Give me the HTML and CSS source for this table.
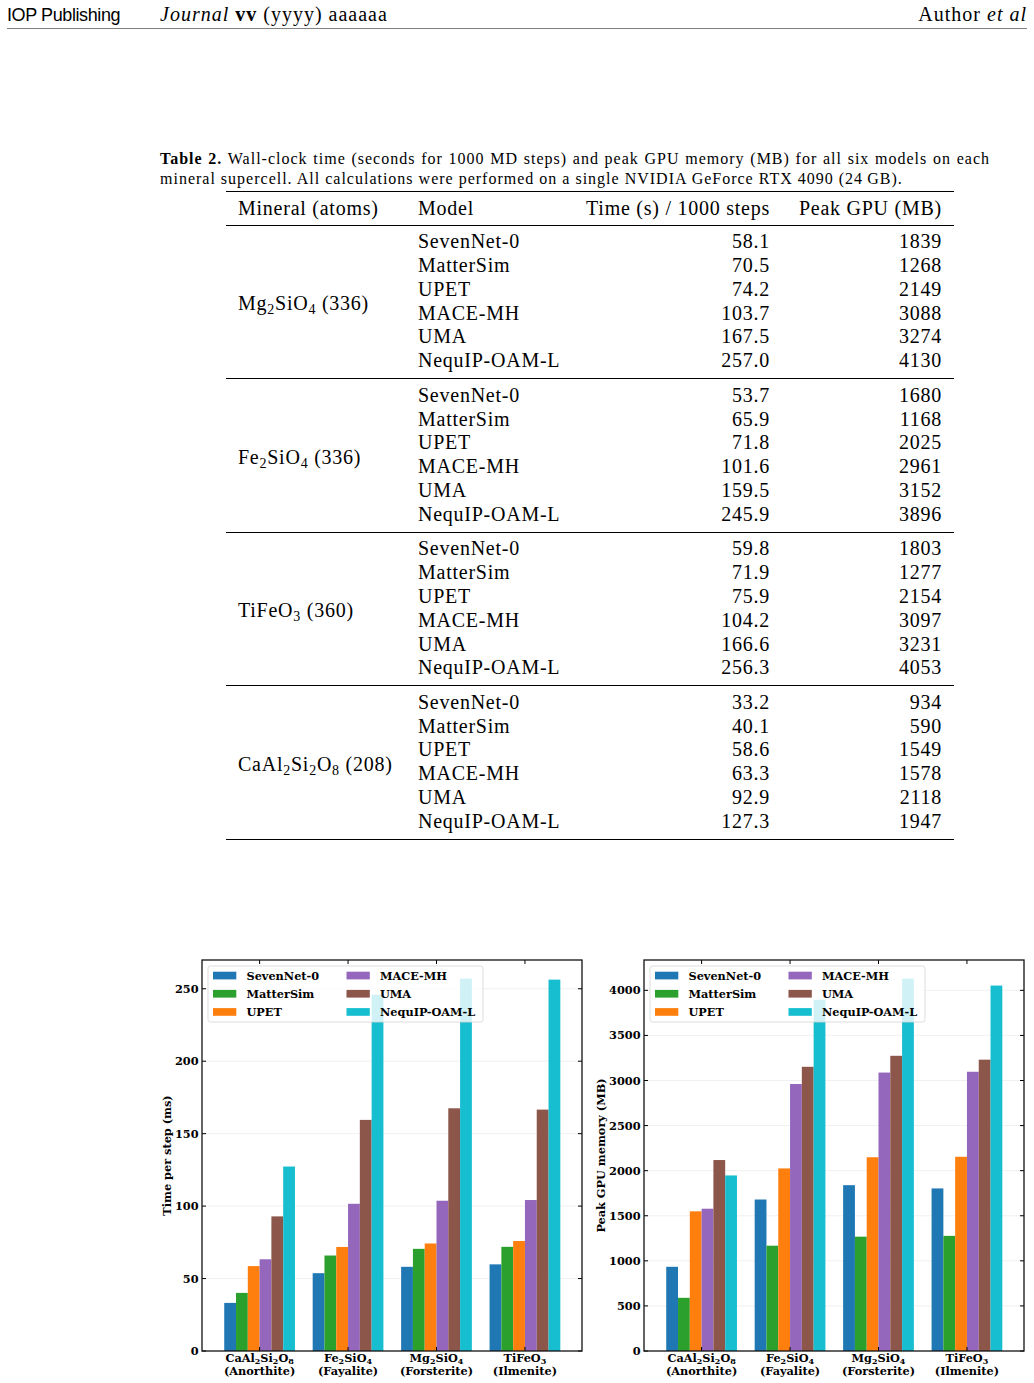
FILE: index.html
```html
<!DOCTYPE html>
<html lang="en">
<head>
<meta charset="UTF-8">
<meta name="viewport" content="width=device-width, initial-scale=1.0">
<title>Table 2 - Wall-clock time and GPU memory</title>
<link rel="stylesheet" href="styles.css">
</head>
<body>
<header class="running-head">
<span class="publisher">IOP Publishing</span>
<span class="journal"><i>Journal</i> <b>vv</b> (yyyy) aaaaaa</span>
<span class="author">Author <i>et al</i></span>
</header>
<div class="caption">
<span class="caption-line first"><b>Table 2.</b> Wall-clock time (seconds for 1000 MD steps) and peak GPU memory (MB) for all six models on each</span>
<span class="caption-line">mineral supercell. All calculations were performed on a single NVIDIA GeForce RTX 4090 (24&#8201;GB).</span>
</div>
<table class="results">
<colgroup>
<col class="col-mineral">
<col class="col-model">
<col class="col-time">
<col class="col-mem">
</colgroup>
<thead>
<tr>
<th class="mineral">Mineral (atoms)</th>
<th class="model">Model</th>
<th class="num">Time (s) / 1000 steps</th>
<th class="num last">Peak GPU (MB)</th>
</tr>
</thead>
<tbody>
<tr><td class="mineral" rowspan="6">Mg<sub>2</sub>SiO<sub>4</sub> (336)</td><td class="model">SevenNet-0</td><td class="num">58.1</td><td class="num last">1839</td></tr>
<tr><td class="model">MatterSim</td><td class="num">70.5</td><td class="num last">1268</td></tr>
<tr><td class="model">UPET</td><td class="num">74.2</td><td class="num last">2149</td></tr>
<tr><td class="model">MACE-MH</td><td class="num">103.7</td><td class="num last">3088</td></tr>
<tr><td class="model">UMA</td><td class="num">167.5</td><td class="num last">3274</td></tr>
<tr><td class="model">NequIP-OAM-L</td><td class="num">257.0</td><td class="num last">4130</td></tr>
</tbody>
<tbody>
<tr><td class="mineral" rowspan="6">Fe<sub>2</sub>SiO<sub>4</sub> (336)</td><td class="model">SevenNet-0</td><td class="num">53.7</td><td class="num last">1680</td></tr>
<tr><td class="model">MatterSim</td><td class="num">65.9</td><td class="num last">1168</td></tr>
<tr><td class="model">UPET</td><td class="num">71.8</td><td class="num last">2025</td></tr>
<tr><td class="model">MACE-MH</td><td class="num">101.6</td><td class="num last">2961</td></tr>
<tr><td class="model">UMA</td><td class="num">159.5</td><td class="num last">3152</td></tr>
<tr><td class="model">NequIP-OAM-L</td><td class="num">245.9</td><td class="num last">3896</td></tr>
</tbody>
<tbody>
<tr><td class="mineral" rowspan="6">TiFeO<sub>3</sub> (360)</td><td class="model">SevenNet-0</td><td class="num">59.8</td><td class="num last">1803</td></tr>
<tr><td class="model">MatterSim</td><td class="num">71.9</td><td class="num last">1277</td></tr>
<tr><td class="model">UPET</td><td class="num">75.9</td><td class="num last">2154</td></tr>
<tr><td class="model">MACE-MH</td><td class="num">104.2</td><td class="num last">3097</td></tr>
<tr><td class="model">UMA</td><td class="num">166.6</td><td class="num last">3231</td></tr>
<tr><td class="model">NequIP-OAM-L</td><td class="num">256.3</td><td class="num last">4053</td></tr>
</tbody>
<tbody>
<tr><td class="mineral" rowspan="6">CaAl<sub>2</sub>Si<sub>2</sub>O<sub>8</sub> (208)</td><td class="model">SevenNet-0</td><td class="num">33.2</td><td class="num last">934</td></tr>
<tr><td class="model">MatterSim</td><td class="num">40.1</td><td class="num last">590</td></tr>
<tr><td class="model">UPET</td><td class="num">58.6</td><td class="num last">1549</td></tr>
<tr><td class="model">MACE-MH</td><td class="num">63.3</td><td class="num last">1578</td></tr>
<tr><td class="model">UMA</td><td class="num">92.9</td><td class="num last">2118</td></tr>
<tr><td class="model">NequIP-OAM-L</td><td class="num">127.3</td><td class="num last">1947</td></tr>
</tbody>
</table>
<div class="figures">
<svg id="timeChart" class="chart left" width="442" height="438"></svg>
<svg id="memChart" class="chart right" width="442" height="438"></svg>
</div>
<script>
const NS = "http://www.w3.org/2000/svg";
const COLORS = ["#1f77b4", "#2ca02c", "#ff7f0e", "#9467bd", "#8c564b", "#17becf"];
const MODELS = ["SevenNet-0", "MatterSim", "UPET", "MACE-MH", "UMA", "NequIP-OAM-L"];
const MINERALS = [
["CaAl_2Si_2O_8", "(Anorthite)"],
["Fe_2SiO_4", "(Fayalite)"],
["Mg_2SiO_4", "(Forsterite)"],
["TiFeO_3", "(Ilmenite)"]
];
// plot area inside each svg
const FRAME = { x: 52, y: 14, w: 380, h: 391 };
const GROUP_START = 57.6;
const GROUP_STEP = 88.45;
const BAR_W = 11.79;
const charts = [
{
id: "timeChart", label: "Time per step (ms)", labelX: 17.5, step: 50, top: 250,
data: [
[33.2, 40.1, 58.6, 63.3, 92.9, 127.3],
[53.7, 65.9, 71.8, 101.6, 159.5, 245.9],
[58.1, 70.5, 74.2, 103.7, 167.5, 257.0],
[59.8, 71.9, 75.9, 104.2, 166.6, 256.3]
]
},
{
id: "memChart", label: "Peak GPU memory (MB)", labelX: 8.7, step: 500, top: 4000,
data: [
[934, 590, 1549, 1578, 2118, 1947],
[1680, 1168, 2025, 2961, 3152, 3896],
[1839, 1268, 2149, 3088, 3274, 4130],
[1803, 1277, 2154, 3097, 3231, 4053]
]
}
];
function el(parent, tag, attrs, text) {
const node = document.createElementNS(NS, tag);
for (const k in attrs) node.setAttribute(k, attrs[k]);
if (text !== undefined) node.textContent = text;
parent.appendChild(node);
return node;
}
function formula(parent, str, x, y) {
const t = el(parent, "text", { x: x, y: y, "text-anchor": "middle" });
let shift = 0;
str.split(/_(\d)/).forEach((part, i) => {
if (!part) return;
const sub = i % 2 === 1;
const attrs = { dy: sub ? 2.6 : -shift };
if (sub) attrs["font-size"] = "8";
el(t, "tspan", attrs, part);
shift = sub ? 2.6 : 0;
});
}
charts.forEach((chart) => {
const svg = document.getElementById(chart.id);
const max = Math.max(...chart.data.flat()) * 1.05;
const bottom = FRAME.y + FRAME.h;
const right = FRAME.x + FRAME.w;
const yOf = (v) => bottom - v * FRAME.h / max;
for (let v = chart.step; v <= chart.top; v += chart.step) {
el(svg, "line", { x1: FRAME.x, x2: right, y1: yOf(v), y2: yOf(v), class: "grid" });
}
chart.data.forEach((group, g) => {
const cx = FRAME.x + GROUP_START + g * GROUP_STEP;
group.forEach((v, m) => {
el(svg, "rect", { x: cx - 3 * BAR_W + m * BAR_W, y: yOf(v), width: BAR_W, height: bottom - yOf(v), fill: COLORS[m] });
});
el(svg, "line", { x1: cx, x2: cx, y1: bottom, y2: bottom - 4, class: "tick" });
el(svg, "line", { x1: cx, x2: cx, y1: FRAME.y, y2: FRAME.y + 4, class: "tick" });
formula(svg, MINERALS[g][0], cx, bottom + 10.5);
el(svg, "text", { x: cx, y: bottom + 24, "text-anchor": "middle" }, MINERALS[g][1]);
});
for (let v = 0; v <= chart.top; v += chart.step) {
const y = yOf(v);
el(svg, "line", { x1: FRAME.x, x2: FRAME.x + 4, y1: y, y2: y, class: "tick" });
el(svg, "line", { x1: right, x2: right - 4, y1: y, y2: y, class: "tick" });
el(svg, "text", { x: FRAME.x - 3.5, y: y + 4, "text-anchor": "end" }, v);
}
el(svg, "rect", { x: FRAME.x, y: FRAME.y, width: FRAME.w, height: FRAME.h, class: "frame" });
const cy = FRAME.y + FRAME.h / 2;
el(svg, "text", { x: chart.labelX, y: cy, "text-anchor": "middle", transform: "rotate(-90 " + chart.labelX + " " + cy + ")", dy: "0.35em" }, chart.label);
// legend, two columns of three
el(svg, "rect", { x: FRAME.x + 6, y: FRAME.y + 6, width: 275, height: 56, rx: 2.5, class: "legend-box" });
MODELS.forEach((name, m) => {
const col = Math.floor(m / 3);
const row = m % 3;
const px = FRAME.x + 11 + col * 133.5;
const py = FRAME.y + 11.7 + row * 18.2;
el(svg, "rect", { x: px, y: py, width: 23.3, height: 7.7, fill: COLORS[m] });
el(svg, "text", { x: px + 33.5, y: py + 7.9 }, name);
});
});
</script>
</body>
</html>
```

FILE: styles.css
```css
body {
margin: 0;
background: #fff;
color: #000;
font-family: "Liberation Serif", serif;
}
.running-head {
display: flex;
align-items: baseline;
margin: 0 7px;
height: 28px;
line-height: 28px;
border-bottom: 1px solid #808080;
}
.publisher {
width: 153px;
font-family: "Liberation Sans", sans-serif;
font-size: 18px;
letter-spacing: -0.4px;
}
.journal {
flex: 1;
font-size: 20px;
letter-spacing: 1px;
}
.author {
font-size: 20px;
letter-spacing: 1px;
}
.caption {
margin: 120px 0 0 160px;
width: 830px;
font-size: 16px;
line-height: 20px;
letter-spacing: 1px;
}
.caption-line {
display: block;
white-space: nowrap;
}
.caption-line.first {
text-align: justify;
text-align-last: justify;
}
.results {
margin: 2px 0 0 226px;
width: 728px;
table-layout: fixed;
border-collapse: collapse;
border-top: 1.5px solid #000;
border-bottom: 1.5px solid #000;
font-size: 20px;
letter-spacing: 0.75px;
line-height: 23.85px;
}
.col-mineral { width: 180px; }
.col-model { width: 164px; }
.col-time { width: 212px; }
.col-mem { width: 172px; }
.results th {
font-weight: normal;
padding: 4.5px 12px 4.25px;
border-bottom: 1px solid #000;
}
.results td {
padding: 0 12px;
white-space: nowrap;
}
.results tbody {
border-bottom: 1px solid #000;
}
.results tbody tr:first-child td {
padding-top: 4.5px;
}
.results tbody tr:last-child td {
padding-bottom: 5px;
}
.results .mineral,
.results .model {
text-align: left;
}
.results .num {
text-align: right;
}
.results td.mineral {
vertical-align: middle;
padding-top: 0;
padding-bottom: 0;
}
.results sub {
font-size: 70%;
line-height: 0;
vertical-align: -0.3em;
}
.figures {
display: flex;
margin-top: 106px;
padding-left: 150px;
}
.chart {
display: block;
flex: none;
}
.chart text {
font-family: "DejaVu Serif", serif;
font-weight: bold;
font-size: 11.3px;
fill: #000;
}
.chart .grid {
stroke: #ececec;
stroke-width: 0.8;
}
.chart .tick {
stroke: #000;
stroke-width: 1;
}
.chart .frame {
fill: none;
stroke: #111;
stroke-width: 1.3;
}
.chart .legend-box {
fill: #fff;
fill-opacity: 0.8;
stroke: #d4d4d4;
stroke-width: 0.8;
}
```
